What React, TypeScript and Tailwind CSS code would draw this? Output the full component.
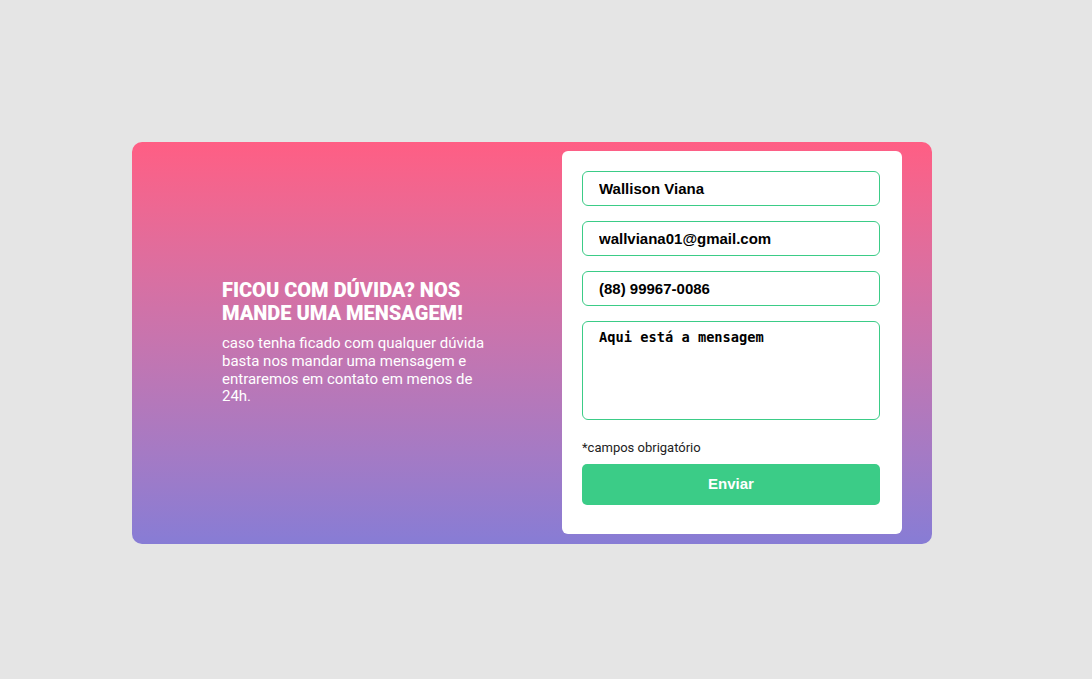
export default function App() {
  return (
    <div className="min-h-[679px] w-full bg-[#e5e5e5] pt-[142px] pl-[132px] font-['Roboto',sans-serif]">
      <div className="flex h-[402px] w-[800px] rounded-[10px] bg-gradient-to-b from-[#ff5e84] to-[#877cd5] pt-[9px] pb-[10px] pr-[30px]">
        <div className="flex flex-1 flex-col justify-center pl-[90px]">
          <h2 className="w-[290px] text-[20px] font-black uppercase leading-[23px] text-white">
            Ficou com dúvida? Nos mande uma mensagem!
          </h2>
          <p className="mt-[10px] w-[270px] text-[15px] leading-[17.7px] text-white">
            caso tenha ficado com qualquer dúvida basta nos mandar uma mensagem e entraremos em contato em menos de 24h.
          </p>
        </div>
        <form className="flex w-[340px] flex-col rounded-[6px] bg-white pl-[20px] pr-[22px] pt-[20px]">
          <div className="flex flex-col gap-[15px]">
            <input
              defaultValue="Wallison Viana"
              className="h-[35px] rounded-[6px] border border-[#3bcc87] px-[16px] font-['Liberation_Sans',sans-serif] text-[15px] font-bold text-black outline-none"
            />
            <input
              defaultValue="wallviana01@gmail.com"
              className="h-[35px] rounded-[6px] border border-[#3bcc87] px-[16px] font-['Liberation_Sans',sans-serif] text-[15px] font-bold text-black outline-none"
            />
            <input
              defaultValue="(88) 99967-0086"
              className="h-[35px] rounded-[6px] border border-[#3bcc87] px-[16px] font-['Liberation_Sans',sans-serif] text-[15px] font-bold text-black outline-none"
            />
            <textarea
              defaultValue="Aqui está a mensagem"
              className="h-[99px] resize-none rounded-[6px] border border-[#3bcc87] px-[16px] py-[5px] font-['DejaVu_Sans_Mono',monospace] text-[13.7px] font-bold text-black outline-none"
            />
          </div>
          <span className="mt-[20px] text-[13px] leading-[16px] text-[#222]">*campos obrigatório</span>
          <button
            type="button"
            className="mt-[8px] h-[41px] rounded-[5px] bg-[#3bcc87] font-['Liberation_Sans',sans-serif] text-[15px] font-bold text-white"
          >
            Enviar
          </button>
        </form>
      </div>
    </div>
  );
}
